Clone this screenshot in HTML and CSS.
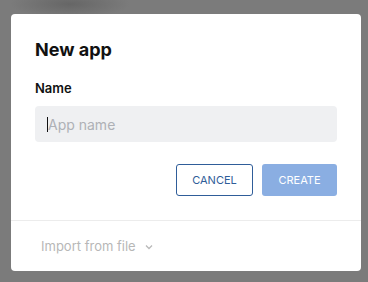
FILE: index.html
```html
<!DOCTYPE html>
<html lang="en">
<head>
  <meta charset="UTF-8" />
  <meta name="viewport" content="width=device-width, initial-scale=1.0"/>
  <title>New app</title>
  <link rel="stylesheet" href="styles.css">
</head>
<body>

  <div class="dialog">
    <div class="dialog-body">
      <h2 class="title">New app</h2>
      <label class="label">Name</label>
      <div class="field">
        <span class="caret"></span>
        <span class="placeholder">App name</span>
      </div>
      <div class="actions">
        <button class="btn btn-outline">CANCEL</button>
        <button class="btn btn-primary">CREATE</button>
      </div>
    </div>
    <div class="dialog-footer">
      <span class="import">Import from file</span>
      <svg class="chevron" width="8" height="6" viewBox="0 0 8 6">
        <path d="M1 1.5 L4 4.5 L7 1.5" fill="none" stroke="#b9b9b9" stroke-width="1.3"/>
      </svg>
    </div>
  </div>

</body>
</html>
```

FILE: styles.css
```css
:root {
  --backdrop: #7b7b7b;
  --primary: #2f5d99;
  --primary-light: #8aaee2;
  --muted: #b7b7b7;
}

body {
  margin: 0;
  height: 282px;
  overflow: hidden;
  font-family: 'Inter', sans-serif;
  background: radial-gradient(ellipse 60px 14px at 70px 4px, #666 0%, rgba(102,102,102,0) 100%), var(--backdrop);
}

.dialog {
  margin: 14px 0 0 11px;
  width: 350px;
  height: 257px;
  background: #fff;
  border-radius: 4px;
  display: flex;
  flex-direction: column;
}

.dialog-body {
  padding: 24px 24px 24px 24px;
  border-bottom: 1px solid #ececec;
}

.title {
  margin: 0;
  font-size: 18px;
  line-height: 24px;
  font-weight: 700;
  color: #111;
}

.label {
  display: block;
  margin-top: 18px;
  font-size: 13px;
  line-height: 16px;
  font-weight: 600;
  color: #111;
}

.field {
  margin-top: 10px;
  height: 36px;
  border-radius: 4px;
  background: #eff0f2;
  display: flex;
  align-items: center;
  padding-left: 12px;
}

.caret {
  width: 1px;
  height: 15px;
  background: #111;
}

.placeholder {
  font-size: 14px;
  color: #aeb1b6;
}

.actions {
  margin-top: 22px;
  display: flex;
  justify-content: flex-end;
  gap: 9px;
}

.btn {
  height: 32px;
  border-radius: 3px;
  font-family: 'Inter', sans-serif;
  font-size: 11px;
  font-weight: 400;
  padding: 0;
  cursor: pointer;
}

.btn-outline {
  width: 77px;
  background: #fff;
  border: 1px solid var(--primary);
  color: var(--primary);
}

.btn-primary {
  width: 75px;
  background: var(--primary-light);
  border: none;
  color: #fff;
}

.dialog-footer {
  flex: 1;
  display: flex;
  align-items: center;
  padding-left: 30px;
  gap: 9px;
}

.import {
  font-size: 13px;
  color: var(--muted);
}

.chevron {
  margin-top: 1px;
}
```
